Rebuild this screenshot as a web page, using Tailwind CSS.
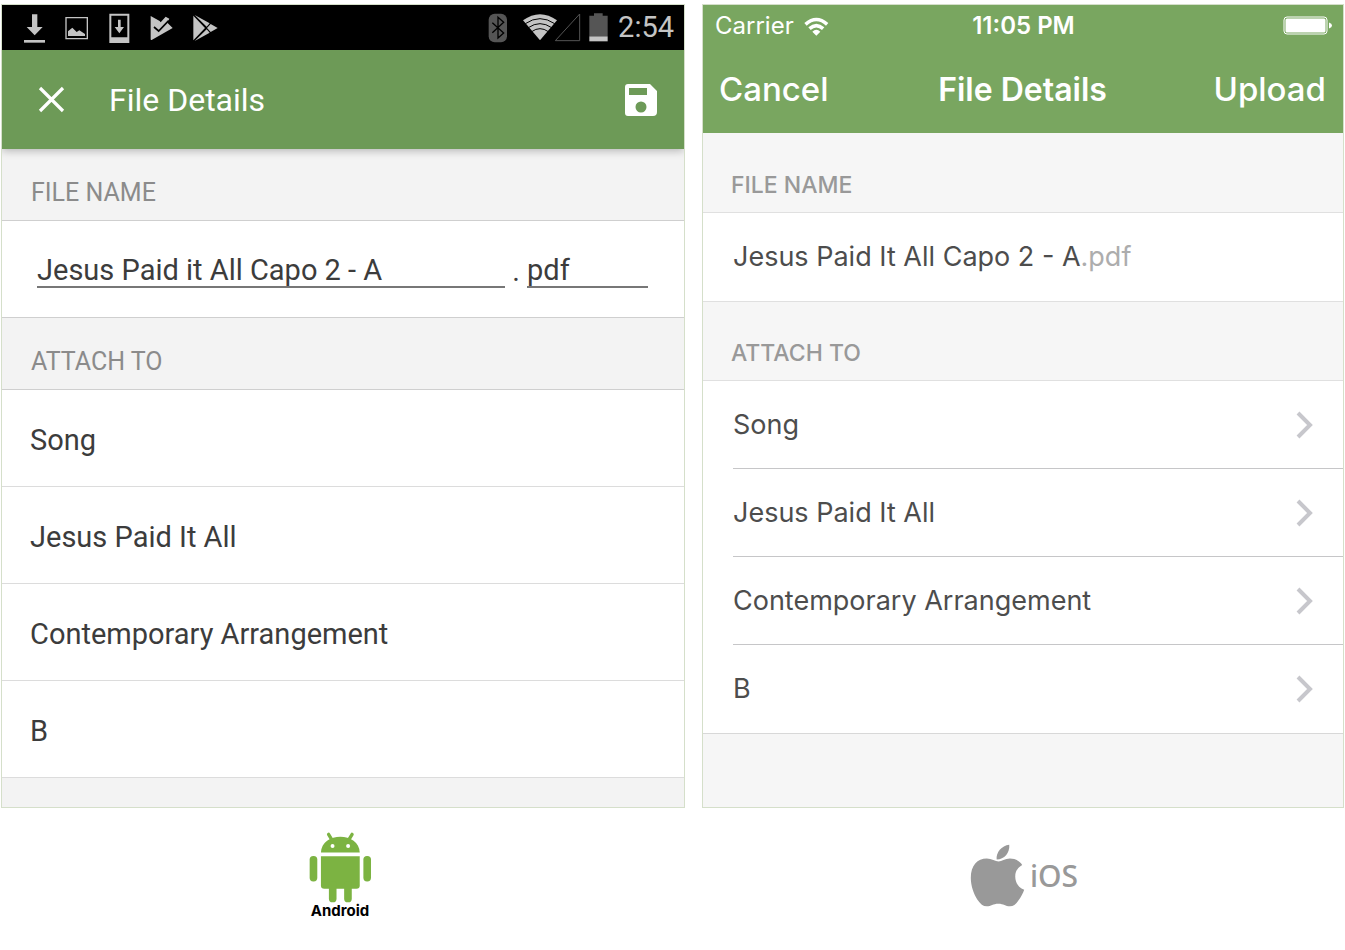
<!DOCTYPE html>
<html lang="en">
    <head>
        <meta charset="utf-8">
        <meta name="viewport" content="width=device-width, initial-scale=1">
        <title>File Details</title>
        <script src="https://cdn.jsdelivr.net/npm/@tailwindcss/browser@4"></script>
    </head>

    <body class="bg-white">

        <main class="grid grid-cols-[684fr_642fr] gap-x-[17px] px-px pt-1">

            <!-- android -->
            <section class="flex flex-col overflow-hidden font-['Roboto',sans-serif] border border-[#d5dfca] bg-[#f3f3f3] text-[#3c3c3c]">
                <div class="h-[45px] bg-black flex items-center justify-between pl-[22px] pr-[10px]">
                    <div class="flex items-center gap-5 text-[#c4c4c4]">
                        <svg class="w-[21px] h-[30px]" viewBox="72 36 63 90" fill="currentColor"><path d="M96 40h16v38h16l-24 25-24-25h16z"/><path d="M72 117h63v8H72z"/></svg>
                        <svg class="w-6 h-[30px]" viewBox="195 36 72 90" fill="currentColor"><path d="M198 50h64v63h-64z" fill="none" stroke="currentColor" stroke-width="4"/><path d="M204 105V91l13-11 13 13 8-5 17 11v6z"/></svg>
                        <svg class="w-[21px] h-[30px]" viewBox="327 36 63 90" fill="currentColor"><path fill-rule="evenodd" d="M328 38h60v88h-60zM334 44v65h48V44z"/><path d="M354 56h8v22h10l-14 19-14-19h10z"/></svg>
                        <svg class="w-[23px] h-[30px]" viewBox="453 36 69 90" fill="currentColor"><path d="M455 45l27 15 3 4 15-17 11 6-6 12 16 16-63 36q-3 1-3-2z"/><path d="M465 78l14 12 30-31" fill="none" stroke="#000" stroke-width="5"/></svg>
                        <svg class="w-[25px] h-[30px]" viewBox="578 36 75 90" fill="currentColor"><path d="M579 44l35 37-35 37zM583 42l45 25-9 10zM583 120l45-25-9-10zM631 69l21 12-21 12-11-12z"/></svg>
                    </div>
                    <div class="flex items-center text-[29px] leading-none text-[#c4c4c4]">
                        <svg class="w-5 h-[30px] mr-[14px]" viewBox="84 36 60 90"><rect x="86" y="38" width="55" height="86" rx="18" fill="#555"/><path d="M97 65l34 31-17 15V49l17 15-34 31" fill="none" stroke="#000" stroke-width="4"/></svg>
                        <svg class="w-[91px] h-[30px] mr-[5px]" viewBox="186 36 273 90"><path d="M189 58Q240 22 291 58L240 118z" fill="#c4c4c4"/><path d="M196 68q44-30 88 0M205 80q35-24 70 0M215 92q25-18 50 0" fill="none" stroke="#000" stroke-width="3"/><path d="M286 119h73V39z" fill="none" stroke="#555" stroke-width="3"/><path d="M388 44h14v-7h26v7h15v62h-55z" fill="#555"/><path d="M388 106h55v15h-55z" fill="#c4c4c4"/></svg>
                        <span>2:54</span>
                    </div>
                </div>
                <header class="z-10 h-[99px] bg-[#6d9a57] shadow-[0_2px_8px_rgba(0,0,0,0.25)] flex items-center pl-[36px] pr-[26px] text-white">
                    <button type="button" aria-label="Close"><svg class="size-7" viewBox="0 0 28 28" fill="none" stroke="currentColor" stroke-width="3.200"><path d="M2 2l23 23M25 2L2 25"/></svg></button>
                    <h1 class="ml-[43px] text-[32px] leading-10">File Details</h1>
                    <button type="button" aria-label="Save" class="ml-auto"><svg class="size-[34px]" viewBox="0 0 34 34"><path fill="currentColor" fill-rule="evenodd" d="M4 1h22l7 7v21a4 4 0 0 1-4 4H4a3 3 0 0 1-3-3V4a3 3 0 0 1 3-3zM5 5v7h18V5zM17 18.500a5.500 5.500 0 1 0 0 11 5.500 5.500 0 0 0 0-11z"/></svg></button>
                </header>
                <h2 class="h-[72px] border-b border-[#cfcfcf] flex items-end pl-[29px] pb-[11px] text-[25px] leading-8 text-[#8b8b8b]">FILE NAME</h2>
                <div class="h-[97px] border-b border-[#cfcfcf] bg-white flex items-center pl-[35px] pr-[36px] pt-1 text-[29px] leading-8">
                    <input aria-label="File name" value="Jesus Paid it All Capo 2 - A" class="min-w-0 flex-1 border-b-2 border-[#777] outline-none">
                    <span class="px-[7px]">.</span>
                    <input aria-label="Extension" value="pdf" class="w-[121px] border-b-2 border-[#777] outline-none">
                </div>
                <h2 class="h-[72px] border-b border-[#cfcfcf] flex items-end pl-[29px] pb-[11px] text-[25px] leading-8 text-[#8b8b8b]">ATTACH TO</h2>
                <ul class="text-[29px] leading-8 bg-white">
                    <li><a href="#" class="h-[97px] border-b border-[#dcdcdc] flex items-center pl-7 pt-1">Song</a></li>
                    <li><a href="#" class="h-[97px] border-b border-[#dcdcdc] flex items-center pl-7 pt-1">Jesus Paid It All</a></li>
                    <li><a href="#" class="h-[97px] border-b border-[#dcdcdc] flex items-center pl-7 pt-1">Contemporary Arrangement</a></li>
                    <li><a href="#" class="h-[97px] border-b border-[#dcdcdc] flex items-center pl-7 pt-1">B</a></li>
                </ul>
                <div class="h-[29px]"></div>
            </section>

            <!-- ios -->
            <section class="flex flex-col font-['Inter',sans-serif] border border-[#d5dfca] bg-[#f6f6f6] text-[#4d4d4d]">
                <header class="h-32 bg-[#79a660] text-white">
                    <div class="h-[42px] grid grid-cols-[1fr_auto_1fr] items-center pl-3 pr-[11px] text-[24px] leading-8">
                        <span class="flex items-center gap-[10px]">Carrier
                            <svg class="w-[25px] h-[19px]" viewBox="310 46 75 57" fill="currentColor"><path d="M311 64q36-32 72 0l-7 8q-29-26-58 0zM323 77q24-21 48 0l-7 8q-17-15-34 0zM335 90q12-11 24 0l-12 12z"/></svg>
                        </span>
                        <span class="font-semibold">11:05 PM</span>
                        <svg class="justify-self-end w-[49px] h-5" viewBox="0 0 49 20" fill="currentColor"><rect x="1" y="1" width="43" height="17" rx="3" fill="none" stroke="currentColor"/><rect x="2.500" y="2.500" width="40" height="14" rx="1.500"/><path d="M46 6.500q3 1 3 3t-3 3z"/></svg>
                    </div>
                    <div class="h-[86px] grid grid-cols-[1fr_auto_1fr] items-baseline pl-4 pr-[17px] pt-[22px] text-[33px] leading-10">
                        <button type="button" class="justify-self-start font-medium">Cancel</button>
                        <h1 class="text-[32px] leading-10 font-semibold">File Details</h1>
                        <button type="button" class="justify-self-end font-medium">Upload</button>
                    </div>
                </header>
                <h2 class="h-20 border-b border-[#e0e0e0] flex items-end pl-7 pb-[11px] text-[23px] leading-8 font-medium text-[#999]">FILE NAME</h2>
                <div class="h-[89px] border-b border-[#e0e0e0] bg-white flex items-center pl-[30px] text-[27px] leading-8">Jesus Paid It All Capo 2 - A<span class="text-[#adadad]">.pdf</span></div>
                <h2 class="h-[79px] border-b border-[#e0e0e0] flex items-end pl-7 pb-[11px] text-[23px] leading-8 font-medium text-[#999]">ATTACH TO</h2>
                <ul class="bg-white border-b border-[#d8d8d8] pl-[30px] text-[27px] leading-8">
                    <li><a href="#" class="h-[88px] border-b border-[#c6c6c8] flex items-center justify-between pr-[29px]">Song
                        <svg class="w-[18px] h-7" viewBox="0 0 18 28" fill="none" stroke="#c7c7cc" stroke-width="4"><path d="M2 2l12 12L2 26"/></svg></a></li>
                    <li><a href="#" class="h-[88px] border-b border-[#c6c6c8] flex items-center justify-between pr-[29px]">Jesus Paid It All
                        <svg class="w-[18px] h-7" viewBox="0 0 18 28" fill="none" stroke="#c7c7cc" stroke-width="4"><path d="M2 2l12 12L2 26"/></svg></a></li>
                    <li><a href="#" class="h-[88px] border-b border-[#c6c6c8] flex items-center justify-between pr-[29px]">Contemporary Arrangement
                        <svg class="w-[18px] h-7" viewBox="0 0 18 28" fill="none" stroke="#c7c7cc" stroke-width="4"><path d="M2 2l12 12L2 26"/></svg></a></li>
                    <li><a href="#" class="h-[88px] flex items-center justify-between pr-[29px]">B
                        <svg class="w-[18px] h-7" viewBox="0 0 18 28" fill="none" stroke="#c7c7cc" stroke-width="4"><path d="M2 2l12 12L2 26"/></svg></a></li>
                </ul>
            </section>

            <!-- platform logos -->
            <div class="flex flex-col items-center pt-6 pr-[6px]">
                <svg class="w-[63px] h-[71px]" viewBox="57 92 190 214" fill="#7cb342"><path d="M93 154C94 90 209 90 210 154z"/><path d="M116 99l11 18M187 99l-11 18" stroke="#7cb342" stroke-width="10" stroke-linecap="round"/><circle cx="128" cy="134" r="6" fill="#fff"/><circle cx="175" cy="134" r="6" fill="#fff"/><path d="M93 165h117v88q0 10-10 10h-97q-10 0-10-10z"/><rect x="59" y="164" width="23" height="77" rx="11"/><rect x="221" y="164" width="23" height="77" rx="11"/><rect x="117" y="240" width="23" height="64" rx="11"/><rect x="163" y="240" width="23" height="64" rx="11"/></svg>
                <p class="font-['Inter',sans-serif] font-bold text-[15px] leading-4 text-black">Android</p>
            </div>
            <div class="flex justify-center items-center pt-6 pl-[2px] gap-1 text-[#999]">
                <svg class="w-14 h-[63px]" viewBox="62 40 168 190" fill="currentColor"><path d="M219 103C212 92 198 84 182 84c-15 0-25 9-34 9-10 0-21-9-36-9-28 0-48 21-48 58 0 23 8 48 20 66 9 13 17 20 28 20 13 0 19-8 35-8s22 8 35 8c11 0 19-8 26-18 8-11 13-21 17-32-15-6-27-19-27-40 0-15 7-27 21-35z"/><path d="M180 42c2 25-15 44-38 45-3-21 15-43 38-45z"/></svg>
                <span class="font-['Noto_Sans',sans-serif] font-medium text-[30px] leading-9">iOS</span>
            </div>

        </main>

    </body>

</html>
